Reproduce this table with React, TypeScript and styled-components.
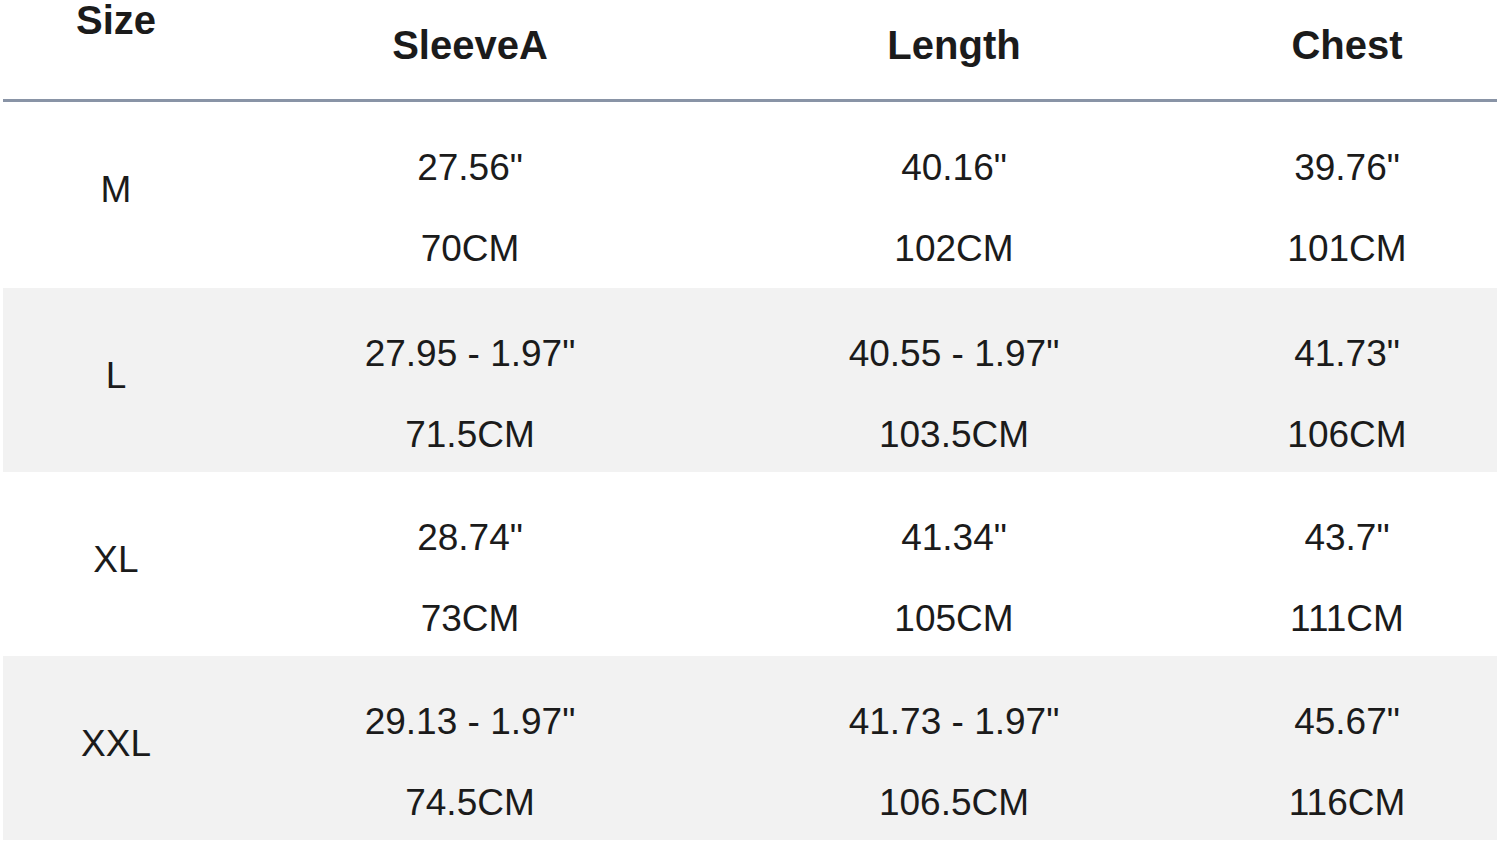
import styled, { createGlobalStyle } from 'styled-components'

const GlobalStyle = createGlobalStyle`
  body {
    margin: 0;
    background: #ffffff;
    font-family: "Liberation Sans", Arial, Helvetica, sans-serif;
    color: #1b1b1b;
  }
`

const Chart = styled.div`
  width: 1494px;
  margin-left: 3px;
`

const Columns = styled.div`
  display: grid;
  grid-template-columns: 226px 482px 486px 1fr;
`

const HeaderRow = styled(Columns)`
  height: 99px;
  border-bottom: 3px solid #8994a6;
  box-shadow: 0 1px 0 #c9d6e6;
`

const HeaderCell = styled.div<{ $raised?: boolean }>`
  text-align: center;
  font-size: 40px;
  font-weight: 700;
  line-height: 40px;
  padding-top: ${({ $raised }) => ($raised ? '0' : '25px')};
`

const Row = styled(Columns)<{ $shaded: boolean, $tall?: boolean }>`
  height: ${({ $tall }) => ($tall ? '186px' : '184px')};
  background: ${({ $shaded }) => ($shaded ? '#f2f2f2' : '#ffffff')};
`

const SizeCell = styled.div`
  text-align: center;
  font-size: 37px;
  line-height: 40px;
  padding-top: 68px;
`

const ValueCell = styled.div`
  display: flex;
  flex-direction: column;
  align-items: center;
  gap: 41px;
  padding-top: 46px;
  font-size: 37px;
  line-height: 40px;
  white-space: nowrap;
`

interface Measure {
  inch: string,
  cm: string,
}

interface SizeRow {
  size: string,
  sleeve: Measure,
  length: Measure,
  chest: Measure,
}

const rows: SizeRow[] = [
  {
    size: 'M',
    sleeve: { inch: '27.56"', cm: '70CM' },
    length: { inch: '40.16"', cm: '102CM' },
    chest: { inch: '39.76"', cm: '101CM' },
  },
  {
    size: 'L',
    sleeve: { inch: '27.95 - 1.97"', cm: '71.5CM' },
    length: { inch: '40.55 - 1.97"', cm: '103.5CM' },
    chest: { inch: '41.73"', cm: '106CM' },
  },
  {
    size: 'XL',
    sleeve: { inch: '28.74"', cm: '73CM' },
    length: { inch: '41.34"', cm: '105CM' },
    chest: { inch: '43.7"', cm: '111CM' },
  },
  {
    size: 'XXL',
    sleeve: { inch: '29.13 - 1.97"', cm: '74.5CM' },
    length: { inch: '41.73 - 1.97"', cm: '106.5CM' },
    chest: { inch: '45.67"', cm: '116CM' },
  },
]

const Value = ({ inch, cm }: Measure) => (
  <ValueCell>
    <span>{inch}</span>
    <span>{cm}</span>
  </ValueCell>
)

export default function App() {
  return (
    <>
      <GlobalStyle />
      <Chart>
        <HeaderRow>
          <HeaderCell $raised>Size</HeaderCell>
          <HeaderCell>SleeveA</HeaderCell>
          <HeaderCell>Length</HeaderCell>
          <HeaderCell>Chest</HeaderCell>
        </HeaderRow>
        {rows.map((row, i) => (
          <Row key={row.size} $shaded={i % 2 === 1} $tall={i === 0}>
            <SizeCell>{row.size}</SizeCell>
            <Value {...row.sleeve} />
            <Value {...row.length} />
            <Value {...row.chest} />
          </Row>
        ))}
      </Chart>
    </>
  )
}
